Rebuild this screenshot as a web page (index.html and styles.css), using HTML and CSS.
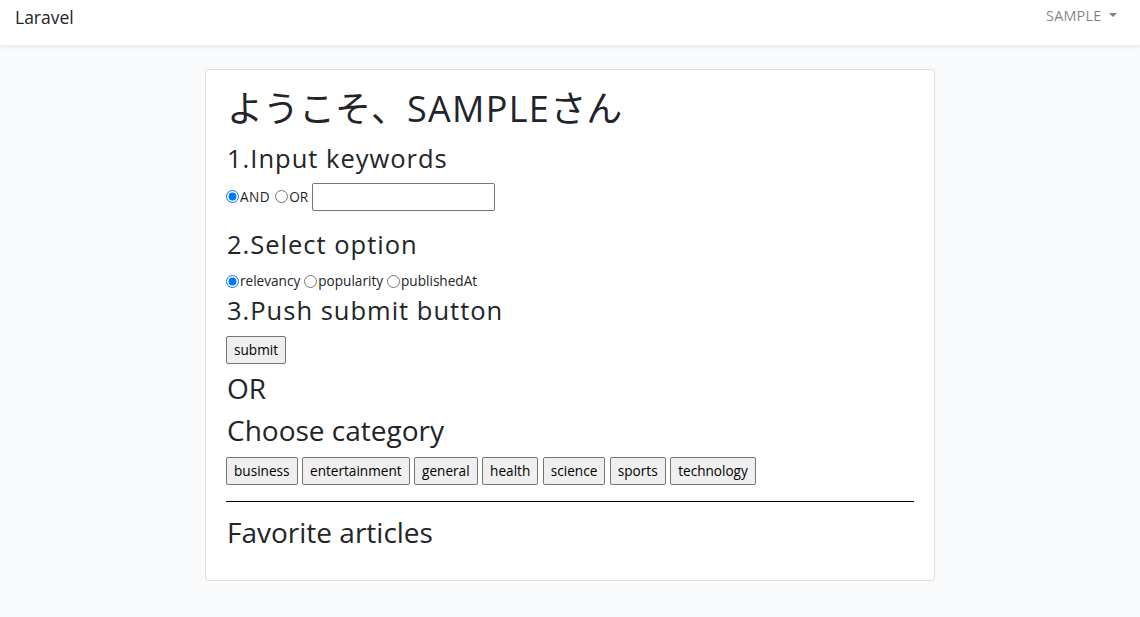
FILE: index.html
```html
<!DOCTYPE html>
<html lang="ja">
<head>
<meta charset="utf-8">
<title>Laravel</title>
<link rel="stylesheet" href="styles.css">
</head>
<body>
<nav class="navbar">
  <a class="brand" href="#">Laravel</a>
  <a class="user" href="#">SAMPLE <span class="caret"></span></a>
</nav>
<main class="main">
  <div class="card">
    <h1 class="title">ようこそ、<span class="latin">SAMPLE</span>さん</h1>
    <h3 class="step step-1">1.Input keywords</h3>
    <form class="form">
      <div class="row-keywords">
        <label class="radio"><input type="radio" name="mode" checked>AND</label>
        <label class="radio"><input type="radio" name="mode">OR</label>
        <input class="text" type="text">
      </div>
      <h3 class="step step-2">2.Select option</h3>
      <div class="row-options">
        <label class="radio"><input type="radio" name="sort" checked>relevancy</label>
        <label class="radio"><input type="radio" name="sort">popularity</label>
        <label class="radio"><input type="radio" name="sort">publishedAt</label>
      </div>
      <h3 class="step step-3">3.Push submit button</h3>
      <button class="btn btn-submit" type="button">submit</button>
    </form>
    <h2 class="section section-or">OR</h2>
    <h2 class="section section-cat">Choose category</h2>
    <div class="cats">
      <button class="btn" type="button">business</button>
      <button class="btn" type="button">entertainment</button>
      <button class="btn" type="button">general</button>
      <button class="btn" type="button">health</button>
      <button class="btn" type="button">science</button>
      <button class="btn" type="button">sports</button>
      <button class="btn" type="button">technology</button>
    </div>
    <hr class="rule">
    <h2 class="section section-fav">Favorite articles</h2>
  </div>
</main>
</body>
</html>
```
FILE: styles.css
```css
html, body { margin: 0; padding: 0; }
body {
  background: #f8fafc;
  font-family: "Open Sans", "Noto Sans CJK JP", sans-serif;
  font-size: 14.4px;
  line-height: 1.6;
  color: #212529;
}
.navbar {
  height: 45px;
  box-sizing: border-box;
  background: #fff;
  box-shadow: 0 2px 4px rgba(0,0,0,0.075);
  display: flex;
  align-items: flex-start;
  justify-content: space-between;
  padding: 3px 23px 0 15px;
  position: relative;
  z-index: 1;
}
.brand {
  color: #212529;
  font-size: 17.5px;
  line-height: 29px;
  text-decoration: none;
}
.user {
  color: rgba(0,0,0,0.5);
  font-size: 14.4px;
  line-height: 26px;
  letter-spacing: 0.2px;
  text-decoration: none;
}
.caret {
  display: inline-block;
  width: 0; height: 0;
  vertical-align: 0.255em;
  margin-left: 0.255em;
  border-top: 0.3em solid rgba(0,0,0,0.5);
  border-left: 0.3em solid transparent;
  border-right: 0.3em solid transparent;
}
.main {
  padding-top: 24px;
  display: flex;
  justify-content: center;
}
.card {
  width: 730px;
  box-sizing: border-box;
  background: #fff;
  border: 1px solid rgba(0,0,0,0.125);
  border-radius: 4px;
  padding: 17px 20px 30.6px 20px;
}
.title {
  font-size: 36px;
  font-weight: 400;
  line-height: 43.2px;
  margin: 0;
  padding-left: 1px;
}
.latin { letter-spacing: 1.3px; }
.step {
  font-size: 25.5px;
  font-weight: 400;
  line-height: 30.6px;
  letter-spacing: 1px;
  margin: 0;
  padding-left: 1px;
}
.step-1 { margin-top: 13px; }
.step-2 { margin-top: 18px; }
.step-3 { margin-top: 3.5px; }
.section {
  font-size: 28px;
  font-weight: 400;
  line-height: 33.6px;
  margin: 0;
  padding-left: 1px;
}
.section-or { margin-top: 8px; }
.section-cat { margin-top: 8px; }
.section-fav { margin-top: 14px; }
.form { margin: 0; }
.row-keywords, .row-options {
  display: flex;
  align-items: center;
  font-size: 13.6px;
  line-height: 21.6px;
}
.row-keywords { margin-top: 9px; height: 28px; }
.row-keywords .radio { margin-right: 5px; }
.row-keywords .radio:nth-child(2) { margin-right: 4px; }
.row-keywords .radio:first-child { letter-spacing: 0.5px; }
.row-options { margin-top: 11px; }
.radio { display: inline-flex; align-items: center; margin-right: 4px; }
.radio input {
  margin: 0 1px 0 0;
  width: 13px;
  height: 13px;
  accent-color: #0075ff;
}
.text {
  width: 183px;
  height: 28px;
  box-sizing: border-box;
  border: 1px solid #767676;
  border-radius: 2px;
  padding: 1px 2px;
  margin: 0;
  font-family: inherit;
}
.btn {
  font-family: inherit;
  font-size: 13.6px;
  color: #000;
  background: #efefef;
  border: 1px solid #767676;
  border-radius: 2px;
  padding: 0 7px;
  height: 28px;
  line-height: 26px;
}
.btn-submit { margin-top: 10px; display: block; }
.cats { display: flex; gap: 4.5px; margin-top: 9.5px; }
.rule {
  border: 0;
  border-top: 1px solid #000;
  margin: 16px 0 0;
  height: 0;
}
```
